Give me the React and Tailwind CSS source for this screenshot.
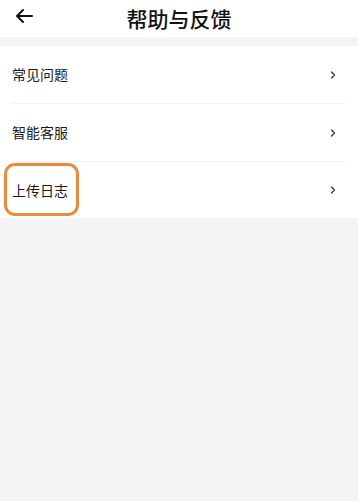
import { ChevronRight } from 'lucide-react'

const items = ['常见问题', '智能客服', '上传日志']

export default function App() {
  return (
    <div
      className="min-h-[501px] w-full bg-[#f4f4f4]"
      style={{ fontFamily: '"Noto Sans CJK SC", "Noto Sans", sans-serif' }}
    >
      <header className="relative flex h-[37px] items-center justify-center bg-white">
        <svg
          className="absolute left-[14px] top-[8px]"
          width="20"
          height="16"
          viewBox="0 0 20 16"
          fill="none"
          stroke="#111"
          strokeWidth="2"
          strokeLinecap="round"
          strokeLinejoin="round"
        >
          <path d="M18 8H3M9 2L3 8l6 6" />
        </svg>
        <h1 className="text-[21px] font-medium leading-none text-[#111]">帮助与反馈</h1>
      </header>

      <div className="mt-[9px] bg-white">
        {items.map((label, i) => (
          <div key={label} className="px-[12px]">
            <div
              className={`relative flex items-center justify-between ${
                i < items.length - 1 ? 'h-[58px] border-b border-[#f3f3f3]' : 'h-[56px]'
              }`}
            >
              <span className="text-[14px] text-[#1a1a1a]">{label}</span>
              <ChevronRight size={12} strokeWidth={2.5} className="mr-[7px] text-[#333]" />
              {label === '上传日志' && (
                <div className="absolute left-[-8px] top-[1px] h-[53px] w-[75px] rounded-[11px] border-[3px] border-[#ea8a3c]" />
              )}
            </div>
          </div>
        ))}
      </div>
    </div>
  )
}
